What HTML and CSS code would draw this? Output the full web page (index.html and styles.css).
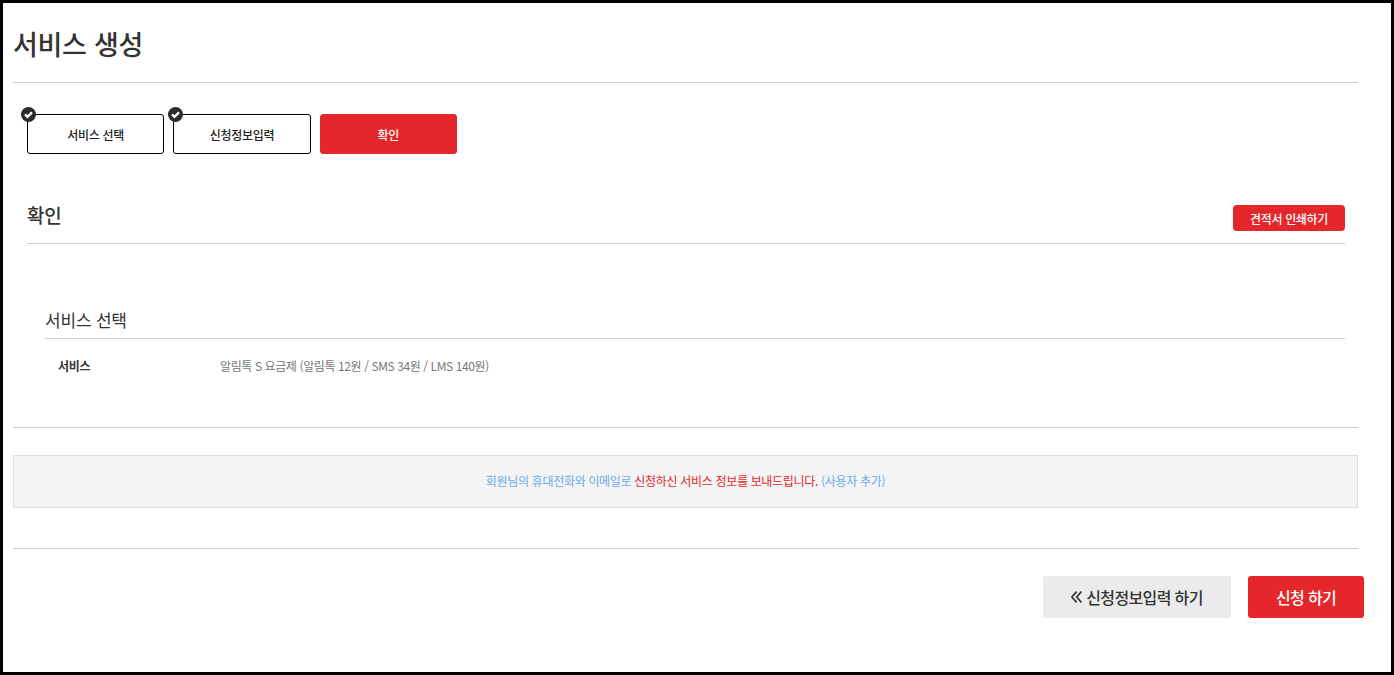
FILE: index.html
```html
<!DOCTYPE html>
<html lang="ko">
<head>
<meta charset="utf-8">
<title>서비스 생성</title>
<link rel="stylesheet" href="styles.css">
</head>
<body>
<div class="frame">
  <div class="page">
    <h1 class="title">서비스 생성</h1>
    <ol class="steps">
      <li class="step done">
        <svg class="badge" viewBox="0 0 15 15" aria-hidden="true"><circle cx="7.5" cy="7.5" r="7.5" fill="#2b2b2b"/><path d="M4 7.4l2.5 2.4 4.5-4.4" fill="none" stroke="#fff" stroke-width="2.4"/></svg>
        서비스 선택
      </li>
      <li class="step done">
        <svg class="badge" viewBox="0 0 15 15" aria-hidden="true"><circle cx="7.5" cy="7.5" r="7.5" fill="#2b2b2b"/><path d="M4 7.4l2.5 2.4 4.5-4.4" fill="none" stroke="#fff" stroke-width="2.4"/></svg>
        신청정보입력
      </li>
      <li class="step active">확인</li>
    </ol>
    <section class="confirm">
      <div class="confirm-head">
        <h2 class="confirm-title">확인</h2>
        <button class="print-btn" type="button">견적서 인쇄하기</button>
      </div>
      <div class="group">
        <h3 class="group-title">서비스 선택</h3>
        <div class="row">
          <div class="row-label">서비스</div>
          <div class="row-value">알림톡 S 요금제 (알림톡 12원 / SMS 34원 / LMS 140원)</div>
        </div>
      </div>
    </section>
    <div class="notice-wrap">
      <p class="notice"><span class="blue">회원님의 휴대전화와 이메일로</span> <span class="red">신청하신 서비스 정보를 보내드립니다.</span> <span class="blue">(사용자 추가)</span></p>
    </div>
    <div class="actions">
      <button class="btn btn-prev" type="button"><svg class="chevrons" viewBox="0 0 11 12" aria-hidden="true"><path d="M5.6 .6L.9 6l4.7 5.4M10.4 .6L5.7 6l4.7 5.4" fill="none" stroke="#333" stroke-width="1.6"/></svg>신청정보입력 하기</button>
      <button class="btn btn-submit" type="button">신청 하기</button>
    </div>
  </div>
</div>
</body>
</html>
```

FILE: styles.css
```css
* { box-sizing: border-box; }
html, body { margin: 0; padding: 0; }
body {
  background: #fff;
  color: #333;
  font-family: "Noto Sans CJK KR", "Noto Sans", sans-serif;
  letter-spacing: -0.02em;
}
.frame {
  width: 1394px;
  height: 675px;
  border: 3px solid #000;
  overflow: hidden;
}
.page {
  width: 1345px;
  margin-left: 10px;
}
.title {
  margin: 0;
  height: 80px;
  padding-top: 21px;
  font-size: 27px;
  line-height: 40px;
  font-weight: 500;
  letter-spacing: -0.3px;
  color: #333;
  border-bottom: 1px solid #ccc;
}
.steps {
  list-style: none;
  margin: 31px 0 0;
  padding: 0 0 0 14px;
  display: flex;
  gap: 9px;
}
.step {
  position: relative;
  width: 137.3px;
  height: 40px;
  display: flex;
  align-items: center;
  justify-content: center;
  border: 1px solid #000;
  border-radius: 3px;
  font-size: 12px;
  font-weight: 500;
  color: #222;
}
.step.active {
  background: #e5262b;
  border-color: #e5262b;
  color: #fff;
}
.badge {
  position: absolute;
  left: -6.7px;
  top: -8px;
  width: 15px;
  height: 15px;
}
.confirm {
  margin: 0 13px 0 14px;
  height: 273px;
}
.confirm-head {
  height: 90px;
  padding-top: 51px;
  display: flex;
  justify-content: space-between;
  align-items: flex-start;
  border-bottom: 1px solid #ccc;
}
.confirm-title {
  margin: -1px 0 0;
  font-size: 19px;
  line-height: 22px;
  font-weight: 500;
  color: #333;
}
.print-btn {
  width: 112px;
  height: 26px;
  border: 0;
  border-radius: 4px;
  background: #e5262b;
  color: #fff;
  font-family: inherit;
  font-size: 12px;
  font-weight: 500;
  letter-spacing: inherit;
  padding: 0;
}
.group { margin-left: 18px; padding-top: 54px; }
.group-title {
  margin: 0;
  height: 41px;
  padding-top: 2px;
  font-size: 17px;
  line-height: 40px;
  font-weight: 400;
  letter-spacing: -0.2px;
  color: #333;
  border-bottom: 1px solid #ccc;
}
.row {
  display: flex;
  padding: 18px 0 0 13px;
  font-size: 12px;
  line-height: 18px;
}
.row-label { width: 162px; font-weight: 700; color: #333; }
.row-value { font-weight: 400; color: #777; letter-spacing: -0.4px; }
.notice-wrap {
  border-top: 1px solid #ccc;
  border-bottom: 1px solid #ccc;
  padding: 27px 0 40px;
}
.notice {
  margin: 0;
  height: 53px;
  border: 1px solid #ddd;
  background: #f4f4f4;
  font-size: 12px;
  line-height: 50px;
  text-align: center;
}
.blue { color: #6aa9ee; }
.red { color: #e5262b; }
.actions {
  display: flex;
  justify-content: flex-end;
  gap: 17px;
  margin: 27px -6px 0 0;
}
.btn {
  height: 42px;
  border: 0;
  border-radius: 3px;
  font-family: inherit;
  font-size: 16px;
  font-weight: 500;
  letter-spacing: -0.04em;
  padding: 0;
}
.btn-prev {
  width: 188px;
  display: flex;
  align-items: center;
  justify-content: center;
  gap: 4px;
  background: #ebebeb;
  color: #333;
}
.btn-submit { width: 116px; background: #e5262b; color: #fff; }
.chevrons { width: 11px; height: 12px; flex: none; }
```
